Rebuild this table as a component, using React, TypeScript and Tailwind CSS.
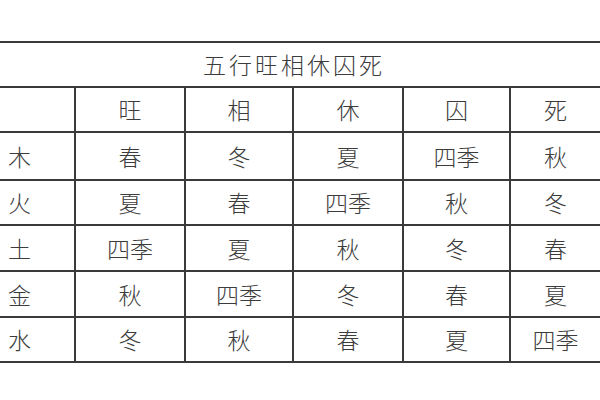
const font = { fontFamily: '"Noto Sans CJK SC", "Noto Sans", sans-serif' };

const header = ["旺", "相", "休", "囚", "死"];

const rows: { label: string; cells: string[]; h: string }[] = [
  { label: "木", cells: ["春", "冬", "夏", "四季", "秋"], h: "h-[48px]" },
  { label: "火", cells: ["夏", "春", "四季", "秋", "冬"], h: "h-[45px]" },
  { label: "土", cells: ["四季", "夏", "秋", "冬", "春"], h: "h-[46px]" },
  { label: "金", cells: ["秋", "四季", "冬", "春", "夏"], h: "h-[46px]" },
  { label: "水", cells: ["冬", "秋", "春", "夏", "四季"], h: "h-[45px]" },
];

// column widths incl. right border; last column takes the rest
const colW = ["w-[110px]", "w-[108px]", "w-[110px]", "w-[107px]"];

function Row({ label, cells, h }: { label: string; cells: string[]; h: string }) {
  return (
    <div className={`flex ${h} border-b-2 border-[#3a3a3a]`}>
      <div className="w-[76px] shrink-0 border-r-2 border-[#3a3a3a] flex items-center pl-[8px]">
        {label}
      </div>
      {cells.map((c, i) => (
        <div
          key={i}
          className={
            i < 4
              ? `${colW[i]} shrink-0 border-r-2 border-[#3a3a3a] flex items-center justify-center`
              : "flex-1 flex items-center justify-center"
          }
        >
          {c}
        </div>
      ))}
    </div>
  );
}

export default function App() {
  return (
    <div className="w-[600px] h-[400px] bg-white overflow-hidden" style={font}>
      <div className="mt-[41px] border-t-2 border-[#3a3a3a] text-[23px] text-[#3c3c3c] font-light leading-none">
        <div className="h-[45px] border-b-2 border-[#3a3a3a] flex items-center justify-center pr-[12px] tracking-[3px]">
          五行旺相休囚死
        </div>
        <Row label="" cells={header} h="h-[45px]" />
        {rows.map((r) => (
          <Row key={r.label} {...r} />
        ))}
      </div>
    </div>
  );
}
